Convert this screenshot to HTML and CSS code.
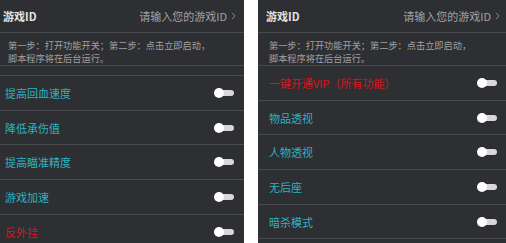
FILE: index.html
```html
<!DOCTYPE html>
<html lang="zh-CN">
<head>
    <meta charset="UTF-8">
    <meta name="viewport" content="width=device-width, initial-scale=1.0">
    <title>游戏助手</title>
    <link rel="stylesheet" href="styles.css">
</head>
<body>
    <div class="screens">
        <div class="panel panel-left">
            <div class="id-row">
                <span class="id-label">游戏ID</span>
                <span class="id-hint">请输入您的游戏ID
                    <svg class="chevron" viewBox="0 0 6 10" width="5" height="8"><path d="M1 1l4 4-4 4" fill="none" stroke="#8a8a8c" stroke-width="1.2"/></svg>
                </span>
            </div>
            <div class="note">
                <div>第一步：打开功能开关；第二步：点击立即启动，</div>
                <div>脚本程序将在后台运行。</div>
            </div>
            <div class="spacer"></div>
            <div class="option"><span class="name">提高回血速度</span><span class="toggle"></span></div>
            <div class="option"><span class="name">降低承伤值</span><span class="toggle"></span></div>
            <div class="option"><span class="name">提高瞄准精度</span><span class="toggle"></span></div>
            <div class="option"><span class="name">游戏加速</span><span class="toggle"></span></div>
            <div class="option"><span class="name red">反外挂</span><span class="toggle"></span></div>
        </div>
        <div class="panel panel-right">
            <div class="id-row">
                <span class="id-label">游戏ID</span>
                <span class="id-hint">请输入您的游戏ID
                    <svg class="chevron" viewBox="0 0 6 10" width="5" height="8"><path d="M1 1l4 4-4 4" fill="none" stroke="#8a8a8c" stroke-width="1.2"/></svg>
                </span>
            </div>
            <div class="note">
                <div>第一步：打开功能开关；第二步：点击立即启动，</div>
                <div>脚本程序将在后台运行。</div>
            </div>
            <div class="option"><span class="name red">一键开通VIP（所有功能）</span><span class="toggle"></span></div>
            <div class="option"><span class="name">物品透视</span><span class="toggle"></span></div>
            <div class="option"><span class="name">人物透视</span><span class="toggle"></span></div>
            <div class="option"><span class="name">无后座</span><span class="toggle"></span></div>
            <div class="option"><span class="name">暗杀模式</span><span class="toggle"></span></div>
            <div class="option"><span class="name"></span><span class="toggle"></span></div>
        </div>
    </div>
</body>
</html>
```

FILE: styles.css
```css
body {
    margin: 0;
    background-color: #ffffff;
    font-family: "Noto Sans CJK SC", "Noto Sans", sans-serif;
}

.screens {
    display: flex;
    gap: 14px;
    height: 243px;
    overflow: hidden;
}

.panel {
    display: flex;
    flex-direction: column;
    height: 243px;
    overflow: hidden;
    background-color: #2e2f32;
}

.panel-left {
    width: 244px;
}

.panel-right {
    width: 248px;
}

.id-row {
    display: flex;
    justify-content: space-between;
    align-items: center;
    flex: none;
    height: 32px;
    padding: 0 8px 0 3px;
    border-bottom: 1px solid #48494c;
}

.id-label {
    font-size: 11px;
    font-weight: bold;
    color: #e4e4e4;
}

.id-hint {
    display: flex;
    align-items: center;
    gap: 4px;
    font-size: 11px;
    color: #a2a2a4;
}

.note {
    display: flex;
    flex-direction: column;
    gap: 2px;
    flex: none;
    height: 33px;
    box-sizing: border-box;
    padding: 7px 0 0 8px;
    font-size: 9.2px;
    line-height: 10.5px;
    color: #a0a0a2;
    border-bottom: 1px solid #48494c;
}

.spacer {
    flex: none;
    height: 9px;
    border-bottom: 1px solid #48494c;
}

.option {
    display: flex;
    justify-content: space-between;
    align-items: center;
    flex: none;
    height: 33.7px;
    padding: 0 10px 0 5px;
    border-bottom: 1px solid #4a4b4e;
}

.option .name {
    font-size: 11px;
    color: #2db2c2;
}

.option .name.red {
    color: #d8151b;
}

.toggle {
    position: relative;
    width: 20px;
    height: 10px;
}

.toggle::before {
    content: "";
    position: absolute;
    left: 4px;
    right: 0;
    top: 2px;
    height: 6px;
    border-radius: 3px;
    background-color: #d8d8da;
}

.toggle::after {
    content: "";
    position: absolute;
    left: 0;
    top: 0;
    width: 10px;
    height: 10px;
    border-radius: 50%;
    background-color: #ffffff;
}

.panel-right .id-row {
    padding: 0 6px 0 8px;
}

.panel-right .note {
    padding-left: 11px;
}

.panel-right .option {
    padding: 0 9px 0 11px;
}
```
